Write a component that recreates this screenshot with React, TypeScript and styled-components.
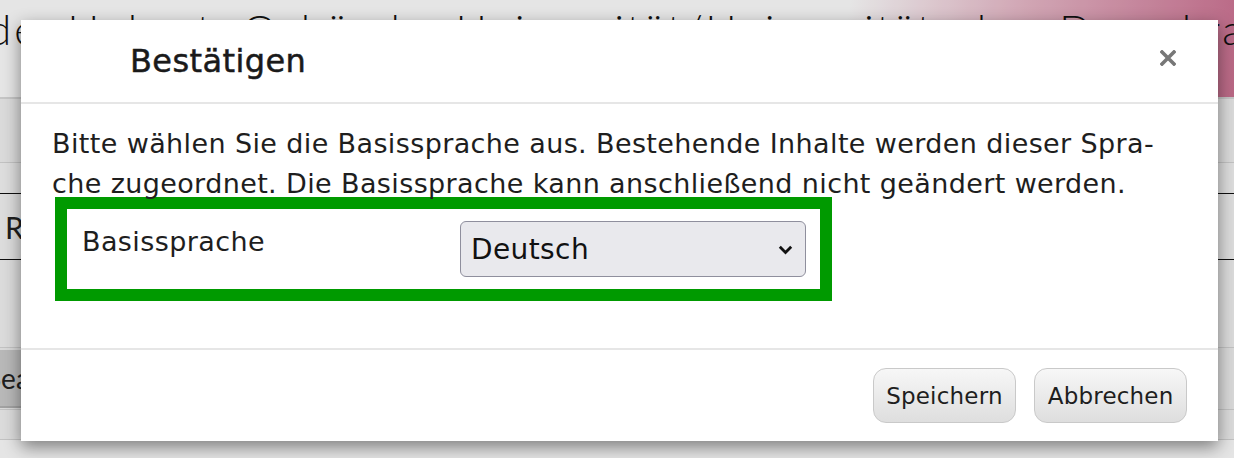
import React from "react";
import styled, { createGlobalStyle } from "styled-components";

const GlobalStyle = createGlobalStyle`
  html, body { margin: 0; padding: 0; }
  body {
    width: 1234px;
    height: 458px;
    overflow: hidden;
    font-family: "DejaVu Sans", "Open Sans", sans-serif;
    color: #222;
    background: #fff;
  }
  * { box-sizing: border-box; }
`;

const Stage = styled.div`
  position: relative;
  width: 1234px;
  height: 458px;
  overflow: hidden;
`;

/* ---------- background page ---------- */
const Page = styled.div`
  display: flex;
  flex-direction: column;
  height: 100%;
  background: #fff;
`;

const Hero = styled.header`
  height: 99px;
  flex: none;
  border-bottom: 2px solid #dcdcdc;
  background: linear-gradient(100deg, #ffffff 0%, #ffffff 68%, #e9b9c9 82%, #cf7394 100%);
  overflow: hidden;
`;

const HeroTitle = styled.h1`
  margin: 0;
  padding: 7px 0 0 0;
  text-indent: -12px;
  white-space: nowrap;
  font-family: "Lato", "Open Sans", sans-serif;
  font-weight: 300;
  font-size: 42px;
  line-height: 44px;
  letter-spacing: 3px;
  word-spacing: 14px;
  color: #111;
`;

const Band = styled.div<{ $h: number; $bg?: string; $line?: string }>`
  height: ${(p) => p.$h}px;
  flex: none;
  background: ${(p) => p.$bg || "#f4f4f4"};
  border-bottom: 1px solid ${(p) => p.$line || "#d8d8d8"};
  display: flex;
  align-items: center;
  overflow: hidden;
`;

const RowText = styled.span`
  font-family: "Lato", sans-serif;
  font-size: 30px;
  color: #222;
  padding-left: 5px;
`;

const GreyButton = styled.span`
  margin-left: -24px;
  height: 58px;
  padding: 0 10px;
  display: flex;
  align-items: center;
  background: #cdcdcd;
  border-bottom: 2px solid #b5b5b5;
  font-family: "Lato", sans-serif;
  font-size: 28px;
  color: #222;
`;

/* ---------- modal ---------- */
const Backdrop = styled.div`
  position: absolute;
  inset: 0;
  background: rgba(0, 0, 0, 0.1);
  padding: 20px 16px 17px 21px;
  display: flex;
`;

const Dialog = styled.div`
  flex: 1;
  background: #fff;
  display: flex;
  flex-direction: column;
  box-shadow: 0 6px 16px rgba(0, 0, 0, 0.45);
`;

const Header = styled.div`
  height: 84px;
  flex: none;
  border-bottom: 2px solid #e6e6e6;
  display: flex;
  align-items: center;
  padding: 0 42px 0 109px;
`;

const Title = styled.h4`
  margin: 0;
  flex: 1;
  font-size: 32px;
  line-height: 40px;
  font-weight: normal;
  color: #1a1a1a;
  letter-spacing: 0.4px;
  -webkit-text-stroke: 0.5px #1a1a1a;
`;

const CloseButton = styled.button`
  border: 0;
  background: transparent;
  padding: 0;
  width: 16px;
  height: 16px;
  margin-top: -6px;
  display: flex;
  cursor: pointer;
`;

const Body = styled.div`
  flex: 1;
  padding: 20px 31px 0 31px;
`;

const Paragraph = styled.p`
  margin: 0;
  font-size: 27px;
  line-height: 40px;
  color: #1e1e1e;
  letter-spacing: 0.38px;
  white-space: nowrap;
`;

const Highlight = styled.div`
  margin: -7px 0 0 3px;
  width: 777px;
  height: 104px;
  border: 12px solid #009a00;
  display: flex;
  align-items: flex-start;
  padding: 12px 14px 0 15px;
`;

const FieldLabel = styled.label`
  width: 378px;
  flex: none;
  font-size: 27px;
  line-height: 42px;
  color: #1e1e1e;
  letter-spacing: 0.4px;
`;

const SelectWrap = styled.div`
  position: relative;
  width: 346px;
  height: 56px;
`;

const Select = styled.select`
  appearance: none;
  width: 100%;
  height: 100%;
  border: 1.5px solid #8f8f9d;
  border-radius: 6px;
  background: #e9e9ed;
  padding: 0 40px 0 10px;
  font-family: "DejaVu Sans", sans-serif;
  font-size: 28px;
  letter-spacing: 0.4px;
  color: #111;
`;

const Chevron = styled.svg`
  position: absolute;
  right: 13px;
  top: 24px;
  pointer-events: none;
`;

const Footer = styled.div`
  height: 93px;
  flex: none;
  border-top: 2px solid #e6e6e6;
  display: flex;
  justify-content: flex-end;
  align-items: flex-start;
  gap: 18px;
  padding: 18px 31px 0 0;
`;

const Button = styled.button`
  height: 55px;
  padding: 0 12.5px;
  border: 1.5px solid #c9c9c9;
  border-radius: 13px;
  background: linear-gradient(#f7f7f7, #dedede);
  font-family: "DejaVu Sans", sans-serif;
  font-size: 23px;
  letter-spacing: 0.2px;
  color: #1e1e1e;
  cursor: pointer;
`;

export default function App() {
  return (
    <Stage>
      <GlobalStyle />
      <Page>
        <Hero>
          <HeroTitle>de Hubert Gebäude Universität/Universität der Demokratie H</HeroTitle>
        </Hero>
        <Band $h={64} $bg="#f3f3f3" />
        <Band $h={31} $bg="#f6f6f6" $line="#111" />
        <Band $h={66} $bg="#f5f5f5" $line="#111">
          <RowText>R</RowText>
        </Band>
        <Band $h={88} $bg="#f4f4f4" />
        <Band $h={62} $bg="#f2f2f2">
          <GreyButton>Search</GreyButton>
        </Band>
        <Band $h={30} $bg="#f4f4f4" />
      </Page>
      <Backdrop>
        <Dialog role="dialog">
          <Header>
            <Title>Bestätigen</Title>
            <CloseButton aria-label="Schließen">
              <svg width="16" height="16" viewBox="0 0 16 16">
                <path d="M2 2 L14 14 M14 2 L2 14" stroke="#777" strokeWidth="3.6" strokeLinecap="square" />
              </svg>
            </CloseButton>
          </Header>
          <Body>
            <Paragraph>
              Bitte wählen Sie die Basissprache aus. Bestehende Inhalte werden dieser Spra-
              <br />
              che zugeordnet. Die Basissprache kann anschließend nicht geändert werden.
            </Paragraph>
            <Highlight>
              <FieldLabel>Basissprache</FieldLabel>
              <SelectWrap>
                <Select defaultValue="de">
                  <option value="de">Deutsch</option>
                  <option value="en">English</option>
                </Select>
                <Chevron width="15" height="10" viewBox="0 0 15 10">
                  <path d="M1.8 1.8 L7.5 7.5 L13.2 1.8" fill="none" stroke="#111" strokeWidth="2.8" />
                </Chevron>
              </SelectWrap>
            </Highlight>
          </Body>
          <Footer>
            <Button>Speichern</Button>
            <Button>Abbrechen</Button>
          </Footer>
        </Dialog>
      </Backdrop>
    </Stage>
  );
}
